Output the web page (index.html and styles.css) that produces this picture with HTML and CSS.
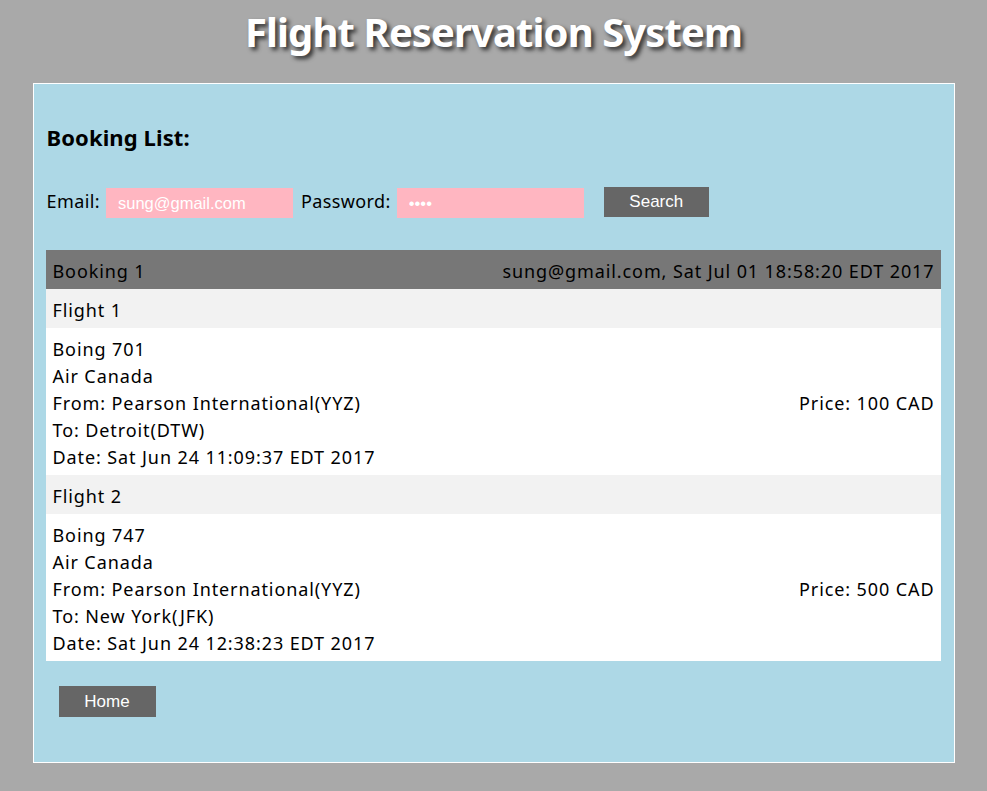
FILE: index.html
```html
<!DOCTYPE html>
<html lang="en">
<head>
<meta charset="utf-8">
<title>Flight Reservation System</title>
<link rel="stylesheet" href="styles.css">
</head>
<body>
<h1 class="title">Flight Reservation System</h1>
<div class="panel">
  <h2 class="heading">Booking List:</h2>
  <form class="search">
    <label class="label" for="email">Email:</label>
    <input class="field" id="email" type="text" value="sung@gmail.com">
    <label class="label" for="pw">Password:</label>
    <input class="field field-last" id="pw" type="password" value="sung">
    <button class="btn search-btn" type="button">Search</button>
  </form>
  <div class="booking">
    <div class="booking-head">
      <span>Booking 1</span>
      <span>sung@gmail.com, Sat Jul 01 18:58:20 EDT 2017</span>
    </div>
    <div class="flight-head">Flight 1</div>
    <div class="flight-body">
      <div class="info">
        <div>Boing 701</div>
        <div>Air Canada</div>
        <div>From: Pearson International(YYZ)</div>
        <div>To: Detroit(DTW)</div>
        <div>Date: Sat Jun 24 11:09:37 EDT 2017</div>
      </div>
      <div class="price">Price: 100 CAD</div>
    </div>
    <div class="flight-head">Flight 2</div>
    <div class="flight-body">
      <div class="info">
        <div>Boing 747</div>
        <div>Air Canada</div>
        <div>From: Pearson International(YYZ)</div>
        <div>To: New York(JFK)</div>
        <div>Date: Sat Jun 24 12:38:23 EDT 2017</div>
      </div>
      <div class="price">Price: 500 CAD</div>
    </div>
  </div>
  <button class="btn home-btn" type="button">Home</button>
</div>
</body>
</html>
```

FILE: styles.css
```css
html, body {
  margin: 0;
  padding: 0;
}
body {
  background: #a9a9a9;
  font-family: "Noto Sans", "Open Sans", sans-serif;
  color: #000;
}
.title {
  margin: 0;
  height: 83px;
  line-height: 64px;
  text-align: center;
  font-size: 40px;
  font-weight: bold;
  letter-spacing: -0.9px;
  color: #fff;
  text-shadow: 3px 3px 4px #333;
}
.panel {
  width: 895px;
  margin: 0 auto;
  border: 1px solid #fff;
  background: #add8e6;
  padding: 38px 13px 45px 12px;
}
.heading {
  margin: 0 0 36px 1px;
  font-size: 22px;
  line-height: 30px;
  font-weight: bold;
  letter-spacing: 0.1px;
}
.search {
  display: flex;
  align-items: center;
  margin: 0 0 32px 1px;
  height: 30px;
}
.label {
  font-size: 18px;
  letter-spacing: 0.4px;
  margin-right: 6px;
  padding-bottom: 4px;
}
.field {
  width: 187px;
  height: 30px;
  box-sizing: border-box;
  border: none;
  background: #ffb6c1;
  color: #fff;
  font-family: "Liberation Sans", Arial, sans-serif;
  font-size: 16.5px;
  padding: 0 12px;
  margin-right: 8px;
  outline: none;
}
.field-last {
  margin-right: 20px;
}
.btn {
  background: #666;
  color: #fff;
  border: none;
  font-family: "Liberation Sans", Arial, sans-serif;
  font-size: 17px;
  height: 31px;
  padding: 0;
  cursor: pointer;
}
.search-btn {
  width: 105px;
  height: 30px;
  margin-bottom: 2px;
}
.booking {
  font-size: 18px;
  line-height: 27px;
  letter-spacing: 0.9px;
}
.booking-head {
  display: flex;
  justify-content: space-between;
  background: #777;
  padding: 8px 6px 4px 7px;
}
.flight-head {
  background: #f2f2f2;
  padding: 8px 7px 4px;
}
.flight-body {
  display: flex;
  justify-content: space-between;
  align-items: center;
  background: #fff;
  padding: 8px 6px 4px 7px;
}
.home-btn {
  display: block;
  width: 97px;
  margin: 25px 0 0 13px;
}
```
